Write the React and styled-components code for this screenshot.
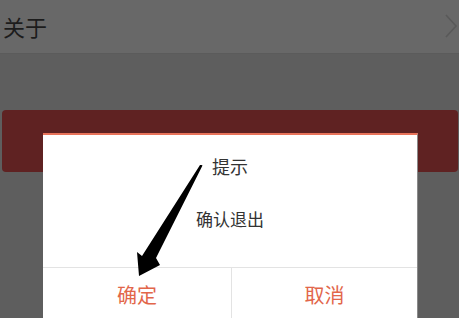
import React from 'react';
import styled, { createGlobalStyle } from 'styled-components';

const GlobalStyle = createGlobalStyle`
  html, body {
    margin: 0;
    padding: 0;
    background: #5e5e5e;
  }
  * { box-sizing: border-box; }
`;

const Page = styled.div`
  position: relative;
  width: 459px;
  height: 318px;
  overflow: hidden;
  background: #5e5e5e;
  font-family: "Noto Sans CJK SC", "Noto Sans", sans-serif;
`;

const HeaderRow = styled.div`
  height: 54px;
  display: flex;
  align-items: center;
  justify-content: space-between;
  padding: 0 1px 2px 3px;
  background: #686868;
  border-bottom: 1px solid #5b5b5b;
`;

const HeaderTitle = styled.span`
  font-size: 22px;
  line-height: 1;
  color: #1c1c1c;
`;

const Body = styled.div`
  padding: 56px 1px 0 2px;
`;

const RedBar = styled.div`
  height: 62px;
  background: #5f2222;
  border-radius: 4px;
`;

const Dialog = styled.div`
  position: absolute;
  left: 43px;
  top: 133px;
  width: 375px;
  height: 200px;
  background: #ffffff;
  border-top: 2px solid #e8735a;
  border-right: 1px solid #8a8a8a;
  display: flex;
  flex-direction: column;
`;

const DialogTitle = styled.div`
  padding-top: 18px;
  height: 44px;
  text-align: center;
  font-size: 18px;
  line-height: 26px;
  color: #333333;
`;

const DialogMessage = styled.div`
  padding-top: 28px;
  height: 88px;
  text-align: center;
  font-size: 17px;
  line-height: 24px;
  color: #333333;
`;

const ButtonRow = styled.div`
  display: grid;
  grid-template-columns: 188px 1fr;
  border-top: 1px solid #e3e3e3;
  height: 60px;
`;

const DialogButton = styled.button`
  border: none;
  background: transparent;
  padding: 14px 0 0;
  display: flex;
  justify-content: center;
  align-items: flex-start;
  font-family: inherit;
  font-size: 20px;
  line-height: 26px;
  color: #e2664a;
  border-left: ${(p) => (p.$divided ? '1px solid #e3e3e3' : 'none')};
`;

const Overlay = styled.svg`
  position: absolute;
  left: 0;
  top: 0;
  pointer-events: none;
`;

function Chevron() {
  return (
    <svg width="14" height="26" viewBox="0 0 14 26">
      <path d="M2 2 L12 13 L2 24" fill="none" stroke="#595959" strokeWidth="1.6" />
    </svg>
  );
}

export default function App() {
  return (
    <Page>
      <GlobalStyle />
      <HeaderRow>
        <HeaderTitle>关于</HeaderTitle>
        <Chevron />
      </HeaderRow>
      <Body>
        <RedBar />
      </Body>
      <Dialog>
        <DialogTitle>提示</DialogTitle>
        <DialogMessage>确认退出</DialogMessage>
        <ButtonRow>
          <DialogButton>确定</DialogButton>
          <DialogButton $divided>取消</DialogButton>
        </ButtonRow>
      </Dialog>
      <Overlay width="459" height="318" viewBox="0 0 459 318">
        <path
          d="M201.5 165 L202.5 165.5 L156 258 L160 265 L139 276 L137 252 L142 256 L200 165 Z"
          fill="#000000"
        />
      </Overlay>
    </Page>
  );
}
